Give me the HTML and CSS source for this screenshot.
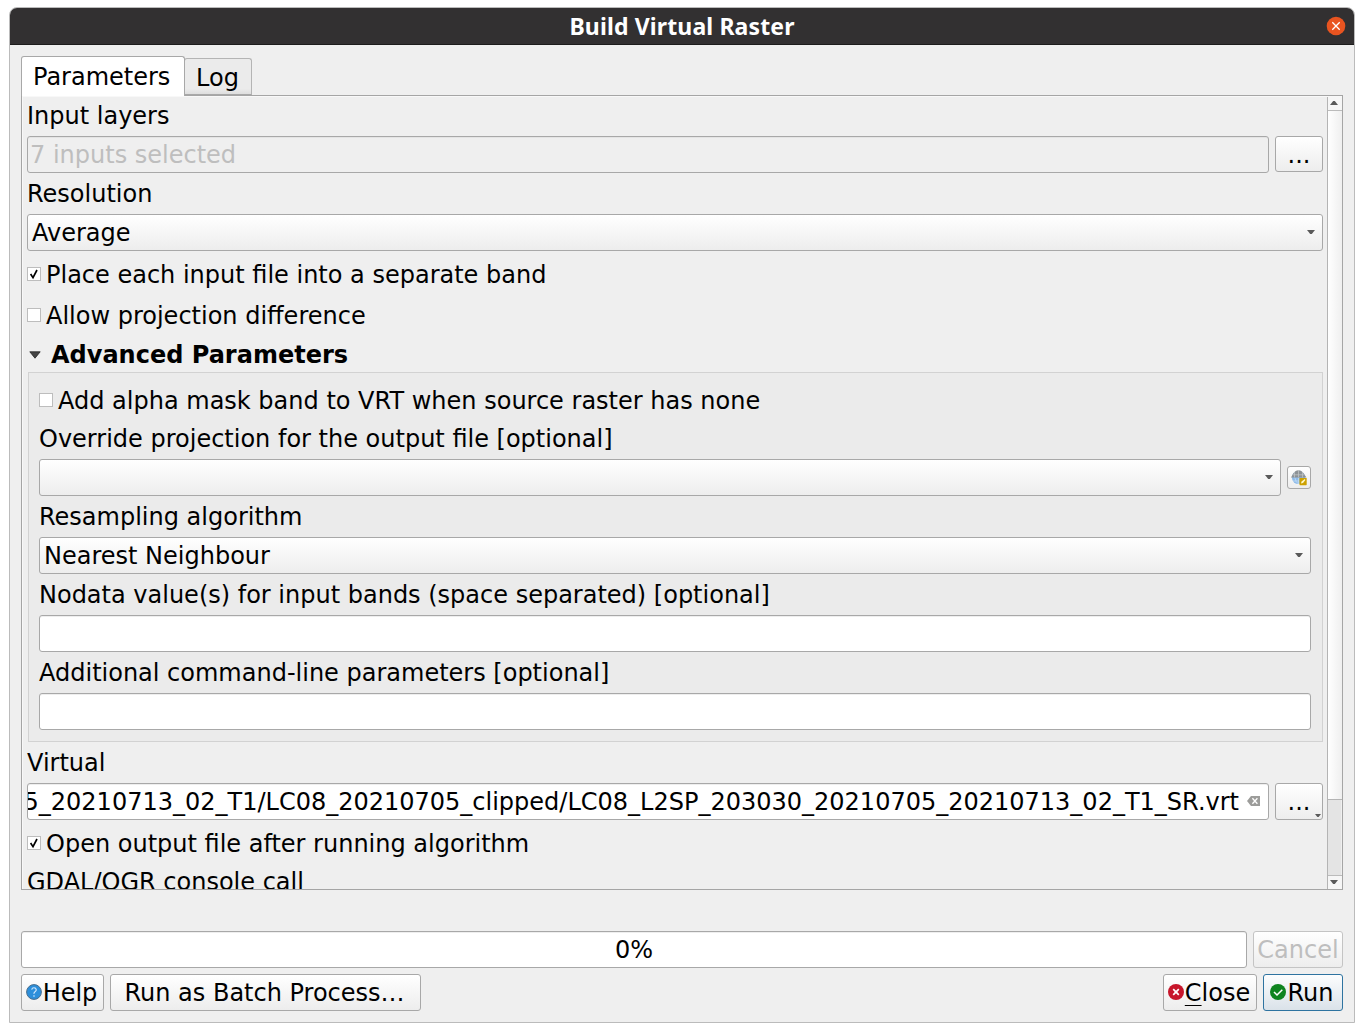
FILE: index.html
```html
<!DOCTYPE html>
<html lang="en">
<head>
<meta charset="utf-8">
<title>Build Virtual Raster</title>
<link rel="stylesheet" href="styles.css">
</head>
<body>
<div class="window">
  <header class="titlebar">
    <span class="title">Build Virtual Raster</span>
    <svg class="win-close" width="20" height="20" viewBox="0 0 20 20"><circle cx="10" cy="10" r="9.3" fill="#e95420"/><path d="M6.3 6.3l7.4 7.4M13.7 6.3l-7.4 7.4" stroke="#fff" stroke-width="1.3"/></svg>
  </header>
  <nav class="tabs">
    <div class="tab active">Parameters</div>
    <div class="tab">Log</div>
  </nav>
  <main class="pane">
    <div class="content">
      <div class="label">Input layers</div>
      <div class="row">
        <div class="field disabled">7 inputs selected</div>
        <div class="button more short">...</div>
      </div>
      <div class="label">Resolution</div>
      <div class="combo">Average<i class="arrow"></i></div>
      <div class="check"><span class="box"><svg width="12" height="12" viewBox="0 0 12 12"><path d="M2.6 6L5 9.6L9 2" fill="none" stroke="#000" stroke-width="1.7"/></svg></span>Place each input file into a separate band</div>
      <div class="check"><span class="box"></span>Allow projection difference</div>
      <div class="group-title"><svg width="12" height="8" viewBox="0 0 12 8"><path d="M.8.8h10.4L6 7.2z" fill="#444" stroke="#222" stroke-width=".8"/></svg>Advanced Parameters</div>
      <section class="group">
        <div class="check"><span class="box"></span>Add alpha mask band to VRT when source raster has none</div>
        <div class="label">Override projection for the output file [optional]</div>
        <div class="row">
          <div class="combo"><i class="arrow"></i></div>
          <div class="button crs"><svg width="16" height="16" viewBox="0 0 16 16"><circle cx="7.5" cy="7.5" r="6.6" fill="#8fbbe9"/><path d="M0 7.5L2 4Q4 .5 7.5.3Q11 .5 13 4L15.5 7.5z" fill="#8d9296"/><path d="M3.5 2v5.5M7.5 0v7.5M11.5 2v5.5M1.5 4.8h12" stroke="#c4c8ca" stroke-width=".7"/><path d="M4 8q.5 4 3.5 6M7.5 8v6M2 11h6" fill="none" stroke="#c6dff7" stroke-width=".7"/><rect x="8.5" y="8" width="7.2" height="7.2" rx=".6" fill="#cda100"/><path d="M10 13.6l.5-2 3.3-2.5.6.8-2.4 3z" fill="#fff8c8"/></svg></div>
        </div>
        <div class="label">Resampling algorithm</div>
        <div class="combo">Nearest Neighbour<i class="arrow"></i></div>
        <div class="label">Nodata value(s) for input bands (space separated) [optional]</div>
        <div class="field"></div>
        <div class="label">Additional command-line parameters [optional]</div>
        <div class="field"></div>
      </section>
      <div class="label">Virtual</div>
      <div class="row">
        <div class="field path"><div class="clip"><span>5_20210713_02_T1/LC08_20210705_clipped/LC08_L2SP_203030_20210705_20210713_02_T1_SR.vrt</span></div><svg width="14" height="10" viewBox="0 0 14 10"><path d="M0 5L4 0h9v10H4z" fill="#9c9c9a"/><path d="M5.4 2.3l5 5.4M10.4 2.3l-5 5.4" stroke="#fff" stroke-width="1.3"/></svg></div>
        <div class="button more">...<i class="arrow corner"></i></div>
      </div>
      <div class="check"><span class="box"><svg width="12" height="12" viewBox="0 0 12 12"><path d="M2.6 6L5 9.6L9 2" fill="none" stroke="#000" stroke-width="1.7"/></svg></span>Open output file after running algorithm</div>
      <div class="label">GDAL/OGR console call</div>
    </div>
    <div class="scrollbar">
      <div class="step"><i class="arrow up"></i></div>
      <div class="thumb"></div>
      <div class="track"></div>
      <div class="step end"><i class="arrow"></i></div>
    </div>
  </main>
  <div class="row progress-row">
    <div class="field progress">0%</div>
    <div class="button cancel">Cancel</div>
  </div>
  <footer class="row actions">
    <div class="button help"><svg width="16" height="16" viewBox="0 0 16 16"><circle cx="8" cy="8" r="7.4" fill="#2c8fdb" stroke="#4b6f8d"/><path d="M5.7 5.7Q6 3.8 8 3.8T10.3 5.8Q10.3 7 9 7.8T8 9.8" fill="none" stroke="#d8ecff" stroke-width="1.1"/><circle cx="8" cy="12" r=".8" fill="#d8ecff"/></svg>Help</div>
    <div class="button batch">Run as Batch Process…</div>
    <div class="button close"><svg width="16" height="16" viewBox="0 0 16 16"><circle cx="8" cy="8" r="8" fill="#c7162b"/><path d="M5.2 5.2l5.6 5.6M10.8 5.2l-5.6 5.6" stroke="#fff" stroke-width="1.7"/></svg><span><span class="mnemonic">C</span>lose</span></div>
    <div class="button run"><svg width="16" height="16" viewBox="0 0 16 16"><circle cx="8" cy="8" r="8" fill="#0e8420"/><path d="M4 8l3 3 5.3-5.3" fill="none" stroke="#fff" stroke-width="1.5"/></svg>Run</div>
  </footer>
</div>
</body>
</html>
```
FILE: styles.css
```css
* { box-sizing: border-box; }
body {
  margin: 0;
  padding: 7px 9px;
  height: 1032px;
  overflow: hidden;
  background: #fff;
  color: #000;
  font: 24px/31px "DejaVu Sans", sans-serif;
  white-space: nowrap;
}
svg { display: block; flex: none; }
.window {
  width: 1346px;
  height: 1016px;
  border: 1px solid #bbb;
  border-radius: 8px 8px 0 0;
  background: #efefef;
  display: flex;
  flex-direction: column;
  overflow: hidden;
}
.titlebar {
  height: 37px;
  flex: none;
  background: #323031;
  border-bottom: 1px solid #1d1c1c;
  display: grid;
  grid-template-columns: 1fr auto 1fr;
  align-items: center;
  padding: 0 8px;
}
.title {
  grid-column: 2;
  color: #fff;
  font: bold 23px/34px "Noto Sans", sans-serif;
  letter-spacing: .13px;
}
.win-close { justify-self: end; }
.tabs {
  display: flex;
  align-items: flex-end;
  height: 40px;
  flex: none;
  margin: 11px 11px -1px;
  position: relative;
  z-index: 1;
}
.tab {
  height: 37px;
  width: 68px;
  margin: 0 0 1px -1px;
  padding: 4px 0 0 11px;
  border: 1px solid #b4b4b4;
  border-bottom-color: #a8a8a8;
  border-radius: 3px 3px 0 0;
  background: linear-gradient(#ebebeb 85%, #dedede);
}
.tab.active {
  z-index: 1;
  width: 164px;
  height: 40px;
  margin: 0;
  padding-top: 5px;
  background: #fff;
  border-color: #a8a8a8;
  border-bottom: 0;
}
.pane {
  height: 795px;
  flex: none;
  margin: 0 11px;
  border: 1px solid #a5a5a5;
  box-shadow: inset 1px 1px #f8f8f8;
  display: flex;
  overflow: hidden;
}
.content {
  flex: 1;
  min-width: 0;
  display: flex;
  flex-direction: column;
  gap: 6px;
  padding: 5px 4px 0 5px;
}
.label { height: 29px; flex: none; }
.row { display: flex; gap: 6px; flex: none; }
.field, .combo {
  height: 37px;
  flex: none;
  padding: 3px 2px;
  border: 1px solid #a8a8a8;
  border-radius: 3px;
  background: #fff;
  box-shadow: inset 0 1px #eee;
}
.row > .field, .row > .combo { flex: 1; min-width: 0; }
.field.disabled { background: #efefef; color: #bebebe; box-shadow: inset 0 1px #e4e4e4; }
.combo {
  display: flex;
  align-items: center;
  padding: 2px 7px 0 4px;
  background: linear-gradient(#fff, #ededed);
  box-shadow: none;
}
.arrow {
  width: 8px;
  height: 4px;
  flex: none;
  background: #5a5a5a;
  clip-path: polygon(0 0, 100% 0, 60% 100%, 40% 100%);
}
.arrow.up { clip-path: polygon(40% 0, 60% 0, 100% 100%, 0 100%); }
.combo .arrow { margin: 0 0 3px auto; }
.button {
  height: 37px;
  flex: none;
  display: flex;
  align-items: center;
  justify-content: center;
  padding-top: 2px;
  border: 1px solid #a8a8a8;
  border-radius: 3px;
  background: linear-gradient(#fff, #ededed);
}
.more { width: 48px; position: relative; }
.more.short { height: 36px; }
.corner {
  position: absolute;
  right: 1px;
  bottom: 2px;
  width: 6px;
  height: 3px;
}
.crs { width: 24px; height: 23px; align-self: center; padding: 0; }
.check { height: 35px; flex: none; display: flex; align-items: center; gap: 5px; padding-top: 2px; }
.box {
  width: 14px;
  height: 14px;
  margin-bottom: 4px;
  border: 1px solid #bdbdbd;
  background: #fff;
}
.group-title {
  height: 31px;
  flex: none;
  display: flex;
  align-items: center;
  gap: 10px;
  padding: 2px 0 0 2px;
  margin-bottom: -4px;
  font-weight: bold;
}
.group-title svg { margin-bottom: 1px; }
.group {
  height: 370px;
  flex: none;
  margin-left: 1px;
  padding: 10px 11px 0 10px;
  border: 1px solid #d2d2d2;
  background: #ebebeb;
  display: flex;
  flex-direction: column;
  gap: 6px;
}
.field.path { display: flex; align-items: center; padding: 2px 7px 0 0; gap: 8px; }
.path svg { margin-bottom: 4px; }
.clip { flex: 1; min-width: 0; display: flex; justify-content: flex-end; overflow: hidden; }
.scrollbar {
  width: 15px;
  flex: none;
  border-left: 1px solid #b4b4b4;
  margin-top: 1px;
  display: flex;
  flex-direction: column;
}
.step {
  height: 14px;
  flex: none;
  display: flex;
  align-items: center;
  justify-content: center;
  padding: 0 2px 1px 0;
  background: #f6f6f6;
  border-bottom: 1px solid #bbb;
}
.step.end { border-bottom: 0; border-top: 1px solid #bbb; }
.thumb { height: 689px; flex: none; background: linear-gradient(90deg, #fff, #efefef); border-bottom: 1px solid #b4b4b4; }
.track { flex: 1; background: #e4e4e4; margin-right: 1px; }
.progress-row { margin: 41px 11px 0; }
.progress { text-align: center; }
.cancel { width: 90px; color: #bebebe; border-color: #c4c4c4; }
.actions { margin: 6px 11px 0; }
.actions .button { gap: 1px; padding-right: 2px; }
.actions svg { margin-bottom: 4px; }
.help { width: 83px; }
.batch { width: 311px; }
.close { width: 94px; margin-left: auto; }
.mnemonic { text-decoration: underline; text-decoration-thickness: 1px; text-underline-offset: 4px; text-decoration-skip-ink: none; }
.run { width: 80px; border-color: #2e73a0; background: linear-gradient(#fcfdfe, #dae2e9); }
```
